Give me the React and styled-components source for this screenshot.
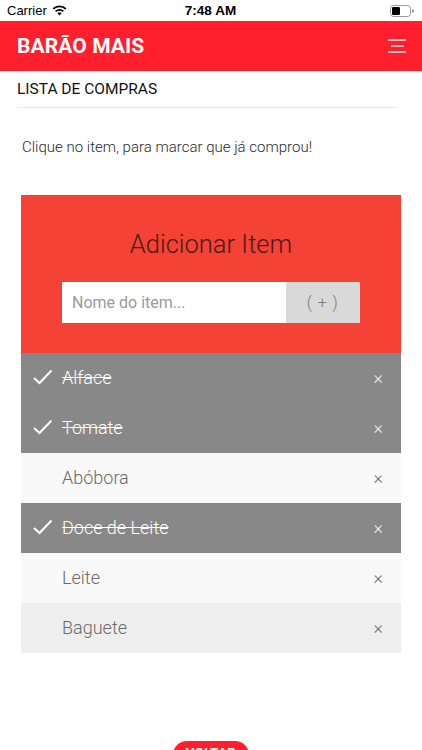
import React from "react";
import styled, { createGlobalStyle } from "styled-components";

const GlobalStyle = createGlobalStyle`
  html, body { margin: 0; padding: 0; background: #fff; }
  body { font-family: Roboto, "Noto Sans", "Liberation Sans", sans-serif; }
  * { box-sizing: border-box; }
`;

const Page = styled.div`
  width: 422px;
  min-height: 750px;
  background: #fff;
  overflow: hidden;
`;

const StatusBar = styled.div`
  height: 21px;
  display: grid;
  grid-template-columns: 1fr auto 1fr;
  align-items: center;
  padding: 0 8px 0 7px;
  font-family: "Liberation Sans", Roboto, sans-serif;
  font-size: 13px;
  color: #000;
`;

const StatusLeft = styled.div`
  display: flex;
  align-items: center;
  gap: 5px;
`;

const Time = styled.div`
  font-weight: 700;
  font-size: 13.5px;
`;

const StatusRight = styled.div`
  display: flex;
  justify-content: flex-end;
  align-items: center;
`;

const AppBar = styled.header`
  height: 50px;
  background: #ff1f2d;
  display: flex;
  align-items: center;
  justify-content: space-between;
  padding: 0 16px 0 17px;
`;

const Brand = styled.h1`
  margin: 0;
  color: #fff;
  font-size: 21px;
  font-weight: 700;
  letter-spacing: 0.1px;
`;

const MenuButton = styled.div`
  width: 18px;
  height: 14px;
  display: flex;
  flex-direction: column;
  justify-content: space-between;
  align-items: center;
`;

const MenuLine = styled.span`
  display: block;
  height: 1.6px;
  width: ${(p) => (p.$short ? "13px" : "18px")};
  background: rgba(255, 255, 255, 0.72);
`;

const SectionTitle = styled.h2`
  margin: 0 25px 0 17px;
  padding: 9px 0 9px;
  line-height: 18px;
  font-size: 15.5px;
  font-weight: 400;
  color: #111;
  border-bottom: 1px solid #e8e8e8;
`;

const Hint = styled.p`
  margin: 29px 0 0 22px;
  line-height: 20px;
  font-size: 15px;
  font-weight: 300;
  color: #2a2a2a;
`;

const Card = styled.section`
  margin: 38px 21px 0;
`;

const AddPanel = styled.div`
  background: #f44336;
  padding: 30px 41px 30px;
  text-align: center;
`;

const PanelTitle = styled.h3`
  margin: 0 0 19px;
  line-height: 38px;
  font-size: 25.5px;
  font-weight: 300;
  color: #4a1a16;
`;

const AddRow = styled.div`
  display: flex;
  height: 41px;
`;

const ItemInput = styled.input`
  width: 75%;
  border: none;
  outline: none;
  padding: 0 10px;
  font-family: Roboto, sans-serif;
  font-size: 16px;
  background: #fff;
  color: #333;
  &::placeholder { color: #9a9a9a; }
`;

const AddButton = styled.div`
  width: 25%;
  background: #d9d9d9;
  color: #777;
  display: flex;
  align-items: center;
  justify-content: center;
  font-size: 16px;
  letter-spacing: 1px;
  font-weight: 300;
  white-space: pre;
`;

const List = styled.ul`
  list-style: none;
  margin: 0;
  padding: 0;
`;

const Row = styled.li`
  height: 50px;
  display: flex;
  align-items: center;
  padding: 0 18px 2px 12px;
  background: ${(p) => (p.$checked ? "#888" : p.$odd ? "#f9f9f9" : "#eee")};
  color: ${(p) => (p.$checked ? "#fff" : "#6a6a6a")};
`;

const CheckSlot = styled.span`
  width: 29px;
  height: 20px;
  display: flex;
  align-items: center;
  flex-shrink: 0;
`;

const ItemName = styled.span`
  font-size: 18px;
  font-weight: 300;
  text-decoration: ${(p) => (p.$checked ? "line-through" : "none")};
`;

const Close = styled.span`
  margin-left: auto;
  font-size: 18px;
  font-weight: 300;
  color: ${(p) => (p.$checked ? "#f2f2f2" : "#6a6a6a")};
`;

const Footer = styled.div`
  display: flex;
  justify-content: center;
  margin-top: 88px;
`;

const BackButton = styled.div`
  width: 76px;
  border-radius: 15px;
  background: #ff1f2d;
  color: #fff;
  font-weight: 700;
  font-size: 13px;
  line-height: 16px;
  padding: 4px 0 8px;
  text-align: center;
  letter-spacing: 0.5px;
`;

const items = [
  { name: "Alface", checked: true },
  { name: "Tomate", checked: true },
  { name: "Abóbora", checked: false },
  { name: "Doce de Leite", checked: true },
  { name: "Leite", checked: false },
  { name: "Baguete", checked: false },
];

const Wifi = () => (
  <svg width="15" height="11" viewBox="0 0 15 11">
    <path d="M7.5 10.6 L5.4 8.3 A3 3 0 0 1 9.6 8.3 Z" fill="#000" />
    <path d="M3.6 6.4 A5.6 5.6 0 0 1 11.4 6.4" stroke="#000" strokeWidth="1.8" fill="none" />
    <path d="M1.2 3.9 A9 9 0 0 1 13.8 3.9" stroke="#000" strokeWidth="1.8" fill="none" />
  </svg>
);

const Battery = () => (
  <svg width="24" height="12" viewBox="0 0 24 12">
    <rect x="0.5" y="0.5" width="20" height="11" rx="3" fill="none" stroke="#999" />
    <rect x="2" y="2" width="8" height="8" rx="1.2" fill="#000" />
    <path d="M22 4 A2 2 0 0 1 22 8 Z" fill="#999" />
  </svg>
);

const Check = () => (
  <svg width="20" height="16" viewBox="0 0 20 16">
    <polyline points="1,9 6.5,14 18.5,1.5" fill="none" stroke="#fff" strokeWidth="2" />
  </svg>
);

export default function App() {
  return (
    <Page>
      <GlobalStyle />
      <StatusBar>
        <StatusLeft>
          <span>Carrier</span>
          <Wifi />
        </StatusLeft>
        <Time>7:48 AM</Time>
        <StatusRight>
          <Battery />
        </StatusRight>
      </StatusBar>
      <AppBar>
        <Brand>BARÃO MAIS</Brand>
        <MenuButton>
          <MenuLine />
          <MenuLine $short />
          <MenuLine />
        </MenuButton>
      </AppBar>
      <SectionTitle>LISTA DE COMPRAS</SectionTitle>
      <Hint>Clique no item, para marcar que já comprou!</Hint>
      <Card>
        <AddPanel>
          <PanelTitle>Adicionar Item</PanelTitle>
          <AddRow>
            <ItemInput placeholder="Nome do item..." />
            <AddButton>( + )</AddButton>
          </AddRow>
        </AddPanel>
        <List>
          {items.map((it, i) => (
            <Row key={it.name} $checked={it.checked} $odd={i % 2 === 0}>
              <CheckSlot>{it.checked && <Check />}</CheckSlot>
              <ItemName $checked={it.checked}>{it.name}</ItemName>
              <Close $checked={it.checked}>×</Close>
            </Row>
          ))}
        </List>
      </Card>
      <Footer>
        <BackButton>VOLTAR</BackButton>
      </Footer>
    </Page>
  );
}
